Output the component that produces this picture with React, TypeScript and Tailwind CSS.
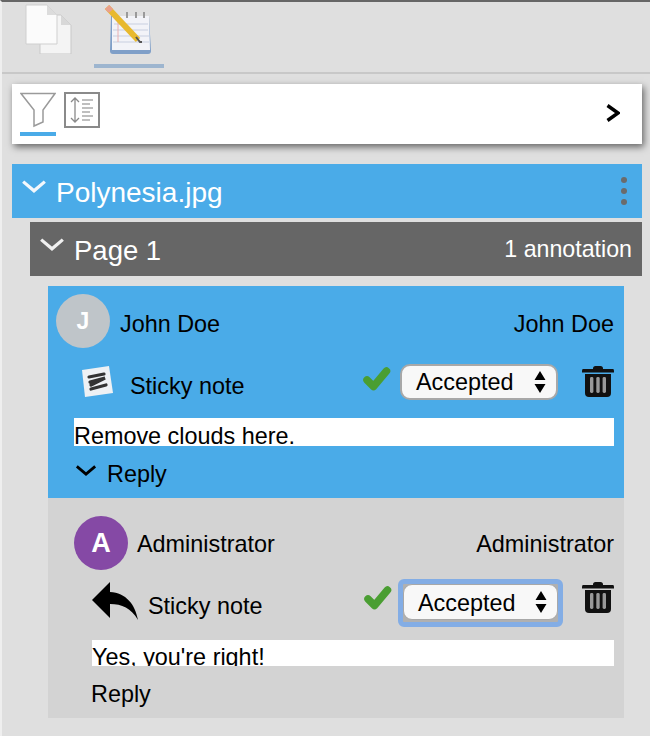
import React from "react";

const Chevron = ({ color, w, h, sw }: { color: string; w: number; h: number; sw: number }) => (
  <svg width={w} height={h} viewBox="0 0 24 12" className="shrink-0 block">
    <path d="M2 1.5 L12 10 L22 1.5" fill="none" stroke={color} strokeWidth={sw} />
  </svg>
);

const Check = () => (
  <svg width="28" height="26" viewBox="0 0 28 26" className="shrink-0 block">
    <path d="M4 14 L10.5 20.5 L23.5 5" fill="none" stroke="#4a9e32" strokeWidth="7.5" strokeLinecap="round" strokeLinejoin="round" />
  </svg>
);

const Trash = () => (
  <svg width="32" height="32" viewBox="0 0 32 32" className="shrink-0 block">
    <path d="M11 3.5 Q11 1 13.5 1 H18.5 Q21 1 21 3.5 V4 H31 Q32 4 32 6 V7.5 H0 V6 Q0 4 1 4 H11Z" fill="#111" />
    <path d="M3 9 H29 V28 Q29 32 25 32 H7 Q3 32 3 28Z" fill="#111" />
    <rect x="8" y="12" width="3.4" height="16" rx="1.4" fill="#999" />
    <rect x="14.3" y="12" width="3.4" height="16" rx="1.4" fill="#999" />
    <rect x="20.6" y="12" width="3.4" height="16" rx="1.4" fill="#999" />
  </svg>
);

const Updown = () => (
  <svg width="12" height="26" viewBox="0 0 12 26" className="shrink-0 block">
    <path d="M6 2 L11.5 11 H0.5Z M0.5 15 H11.5 L6 24Z" fill="#000" />
  </svg>
);

const Select = ({ focused }: { focused?: boolean }) =>
  focused ? (
    <div className="w-[165px] h-[48px] rounded-[6px] border-[5px] border-[#83ade5] bg-[#b0b0b0]">
      <div className="flex items-center justify-between h-[36px] rounded-[9px] border border-[#a8a8a8] bg-[#f8f8f8] pl-[14px] pr-[10px] text-[23.4px] text-black">
        <span className="mt-[3px]">Accepted</span>
        <Updown />
      </div>
    </div>
  ) : (
    <div className="flex items-center justify-between w-[158px] h-[36px] rounded-[10px] border-2 border-[#a8a8a8] bg-[#f8f8f8] pl-[14px] pr-[10px] text-[23.4px] text-black">
      <span className="mt-[1px]">Accepted</span>
      <Updown />
    </div>
  );

const DocIcon = () => (
  <svg width="50" height="50" viewBox="0 0 50 50" className="block blur-[0.6px]">
    <path d="M16 11 H37 L47 21 V50 H16Z" fill="#f4f4f4" stroke="#c9c9c9" strokeWidth="1" />
    <path d="M2 1 H23 L33 11 V40 H2Z" fill="#fbfbfb" stroke="#cfcfcf" strokeWidth="1" />
    <path d="M23 1 V11 H33Z" fill="#dcdcdc" />
    <path d="M37 11 V21 H47Z" fill="#d8d8d8" />
  </svg>
);

const NoteIcon = () => (
  <svg width="50" height="50" viewBox="0 0 50 50" className="block blur-[0.6px]">
    <path d="M8 12 H46 L48 47 Q48 50 45 50 H10 Q7 50 7 47Z" fill="#7f9fc8" />
    <path d="M9 12 H46 L47 46 H9Z" fill="#f2f3f8" />
    <path d="M11 20 H45 M10 26 H45 M10 32 H46 M10 38 H46" stroke="#c8cfe0" strokeWidth="1" />
    <path d="M15 12 V38" stroke="#eab0b0" strokeWidth="1" />
    <path d="M24 8 V14 M33 8 V14 M41 8 V14" stroke="#9a9a9a" strokeWidth="2" />
    <path d="M4 3 L35 36" stroke="#e8b92e" strokeWidth="6" />
    <path d="M4 3 L8 7" stroke="#e9a08c" strokeWidth="6" />
    <path d="M33 33 L37 38 L39 38" stroke="#555" strokeWidth="2" fill="none" />
  </svg>
);

const FilterIcon = () => (
  <svg width="36" height="36" viewBox="0 0 36 36" className="block">
    <path d="M1 1.5 H35 L23 18 V30 L14 34 V18Z" fill="none" stroke="#9a9a9a" strokeWidth="1.5" />
  </svg>
);

const SpacingIcon = () => (
  <svg width="36" height="36" viewBox="0 0 36 36" className="block">
    <rect x="1" y="1" width="34" height="34" fill="none" stroke="#8a8a8a" strokeWidth="2" />
    <path d="M11 6 V30 M7 10 L11 6 L15 10 M7 26 L11 30 L15 26" fill="none" stroke="#8a8a8a" strokeWidth="1.3" />
    <path d="M18 8 H29 M18 12 H26 M18 16 H29 M18 20 H26 M18 24 H29 M18 28 H26" stroke="#aaa" strokeWidth="1.5" />
  </svg>
);

const StickyIcon = () => (
  <svg width="32" height="32" viewBox="0 0 32 32" className="block blur-[0.6px]">
    <path d="M1 4 L28 0 L32 27 L4 31Z" fill="#eef1f4" />
    <path d="M8 11 L23 8 M9 16 L24 12 L10 19 M10 23 L25 19" fill="none" stroke="#333" strokeWidth="3.2" strokeLinecap="round" />
  </svg>
);

const ReplyIcon = () => (
  <svg width="46" height="38" viewBox="0 0 46 38" className="block">
    <path d="M18 0 V10 C34 11 43 22 46 38 C39 26 30 22 18 22 V36 L0 18Z" fill="#000" />
  </svg>
);

const Dots = () => (
  <div className="flex flex-col gap-[5px]">
    <span className="w-[6px] h-[6px] rounded-full bg-[#6b6b6b]" />
    <span className="w-[6px] h-[6px] rounded-full bg-[#6b6b6b]" />
    <span className="w-[6px] h-[6px] rounded-full bg-[#6b6b6b]" />
  </div>
);

export default function App() {
  return (
    <div className="w-[650px] h-[736px] overflow-hidden bg-[#dfdfdf] border-t-2 border-t-[#666] border-l-2 border-l-[#efefef] font-['Liberation_Sans',Arial,sans-serif]">
      <div className="h-[72px] border-b-2 border-[#c8c8c8] flex items-start pl-[22px] gap-[30px] pt-[2px]">
        <DocIcon />
        <div className="flex flex-col items-center w-[70px] -ml-[10px]">
          <div className="-ml-[2px]"><NoteIcon /></div>
          <div className="w-[70px] h-[4px] mt-[10px] bg-[#9db5cf]" />
        </div>
      </div>

      <div className="mt-[10px] ml-[10px] w-[630px] h-[60px] bg-white shadow-[2px_3px_7px_rgba(0,0,0,0.55)] flex items-start pl-[8px] pr-[22px] pt-[8px]">
        <div className="flex flex-col w-[36px]">
          <FilterIcon />
          <div className="h-[4px] mt-[4px] bg-[#4aabe8]" />
        </div>
        <div className="ml-[8px]">
          <SpacingIcon />
        </div>
        <svg width="14" height="18" viewBox="0 0 14 18" className="ml-auto mt-[12px] block">
          <path d="M1.5 1.5 L12 9 L1.5 16.5" fill="none" stroke="#000" strokeWidth="3.4" />
        </svg>
      </div>

      <div className="mt-[20px] ml-[10px] w-[630px] h-[54px] bg-[#4aabe8] flex items-center pl-[9px] pr-[15px] text-white">
        <div className="-mt-[10px]"><Chevron color="#f4f8fc" w={26} h={13} sw={3} /></div>
        <span className="ml-[9px] mt-[4px] text-[28px] leading-none">Polynesia.jpg</span>
        <div className="ml-auto"><Dots /></div>
      </div>

      <div className="mt-[4px] ml-[28px] w-[612px] h-[54px] bg-[#666] flex items-center pl-[9px] pr-[10px] text-white">
        <div className="-mt-[10px]"><Chevron color="#f0f0f0" w={26} h={13} sw={3} /></div>
        <span className="ml-[9px] mt-[4px] text-[27.5px] leading-none">Page 1</span>
        <span className="ml-auto mt-[2px] text-[23.2px] leading-none">1 annotation</span>
      </div>

      <div className="mt-[10px] ml-[46px] w-[576px] h-[212px] bg-[#4aabe8] pt-[8px] pl-[8px] pr-[10px] text-black">
        <div className="flex items-center h-[54px]">
          <div className="w-[54px] h-[54px] rounded-full bg-[#bfc5c9] text-white font-bold text-[23px] flex items-center justify-center">J</div>
          <span className="ml-[10px] mt-[8px] text-[23.4px]">John Doe</span>
          <span className="ml-auto mt-[8px] text-[23.4px]">John Doe</span>
        </div>
        <div className="flex items-start h-[54px] mt-[16px]">
          <div className="ml-[25px] mt-[2px]"><StickyIcon /></div>
          <span className="ml-[17px] mt-[9px] text-[23.4px] leading-[26px]">Sticky note</span>
          <div className="ml-auto mt-[2px]"><Check /></div>
          <div className="ml-[9px]"><Select /></div>
          <div className="ml-[24px] mt-[1px]"><Trash /></div>
        </div>
        <div className="ml-[18px] h-[28px] bg-white text-[23.4px] leading-[36px] overflow-hidden">Remove clouds here.</div>
        <div className="flex items-start mt-[18px] ml-[19px]">
          <div className="mt-[1px]"><Chevron color="#000" w={22} h={11} sw={3} /></div>
          <span className="ml-[10px] -mt-[3px] text-[23.4px] leading-[26px]">Reply</span>
        </div>
      </div>

      <div className="ml-[46px] w-[576px] h-[220px] bg-[#d3d3d3] pt-[18px] pl-[26px] pr-[10px] text-black">
        <div className="flex items-center h-[54px]">
          <div className="w-[54px] h-[54px] rounded-full bg-[#8549a5] text-white font-bold text-[27px] flex items-center justify-center">A</div>
          <span className="ml-[9px] mt-[3px] text-[23.4px]">Administrator</span>
          <span className="ml-auto mt-[3px] text-[23.4px]">Administrator</span>
        </div>
        <div className="flex items-start h-[61px] mt-[9px]">
          <div className="ml-[18px] mt-[3px]"><ReplyIcon /></div>
          <span className="ml-[10px] mt-[14px] text-[23.4px] leading-[26px]">Sticky note</span>
          <div className="ml-auto mt-[6px]"><Check /></div>
          <div className="ml-[6px]"><Select focused /></div>
          <div className="ml-[19px] mt-[2px]"><Trash /></div>
        </div>
        <div className="ml-[18px] h-[26px] bg-white text-[23.4px] leading-[34px] overflow-hidden">Yes, you're right!</div>
        <div className="ml-[17px] mt-[15px] text-[23.4px] leading-[26px]">Reply</div>
      </div>
    </div>
  );
}
